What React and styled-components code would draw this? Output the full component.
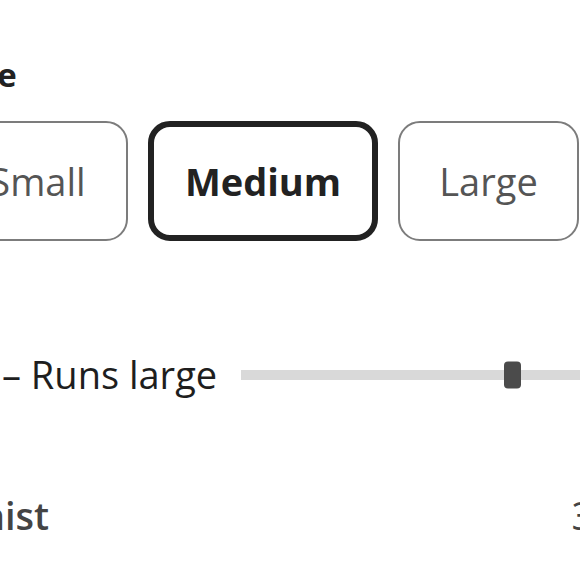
import React from 'react';
import styled, { createGlobalStyle } from 'styled-components';

const GlobalStyle = createGlobalStyle`
  html, body {
    margin: 0;
    padding: 0;
    background: #ffffff;
    overflow: hidden;
  }
  body {
    font-family: "Open Sans", "Liberation Sans", sans-serif;
    color: #222;
  }
`;

const Page = styled.div`
  display: flex;
  flex-direction: column;
  width: 668px;
  margin-left: -53px;
  padding-top: 55px;
`;

const SectionTitle = styled.h3`
  margin: 0;
  padding-left: 6px;
  font-size: 33px;
  line-height: 40px;
  font-weight: 700;
  color: #222;
`;

const ButtonRow = styled.div`
  display: flex;
  gap: 20px;
  margin-top: 26px;
`;

const SizeButton = styled.button`
  box-sizing: border-box;
  flex: none;
  width: ${p => p.$width}px;
  height: 120px;
  display: flex;
  align-items: center;
  justify-content: center;
  background: #fff;
  border: ${p => (p.$selected ? '6px solid #222' : '2px solid #7c7c7c')};
  border-radius: 22px;
  font-family: "Open Sans", "Liberation Sans", sans-serif;
  font-size: 38px;
  font-weight: ${p => (p.$selected ? 700 : 400)};
  color: ${p => (p.$selected ? '#222' : '#555')};
  padding: 0;
  cursor: pointer;
`;

const FitRow = styled.div`
  display: flex;
  align-items: center;
  margin-top: 111px;
  padding-left: 55px;
`;

const FitLabel = styled.span`
  font-size: 38px;
  line-height: 1.2;
  color: #1e1e1e;
  white-space: nowrap;
`;

const Track = styled.div`
  position: relative;
  flex: 1;
  height: 10px;
  margin-left: 24px;
  background: #d9d9d9;
`;

const Thumb = styled.div`
  position: absolute;
  top: 50%;
  width: 17px;
  height: 27px;
  margin-left: -9px;
  transform: translateY(-50%);
  background: #4b4b4b;
  border-radius: 4px;
`;

const MeasureRow = styled.div`
  display: flex;
  justify-content: space-between;
  align-items: baseline;
  margin-top: 95px;
`;

const MeasureName = styled.span`
  font-size: 38px;
  line-height: 1.2;
  font-weight: 600;
  color: #444;
`;

const MeasureValue = styled.span`
  font-size: 38px;
  line-height: 1.2;
  color: #444;
`;

const sizes = [
  { label: 'Small', width: 181 },
  { label: 'Medium', width: 230 },
  { label: 'Large', width: 181 },
];

export default function App() {
  const [selected, setSelected] = React.useState('Medium');
  const fit = 72.7;

  return (
    <>
      <GlobalStyle />
      <Page>
        <SectionTitle>Size</SectionTitle>
        <ButtonRow>
          {sizes.map(s => (
            <SizeButton
              key={s.label}
              $width={s.width}
              $selected={selected === s.label}
              onClick={() => setSelected(s.label)}
            >
              {s.label}
            </SizeButton>
          ))}
        </ButtonRow>
        <FitRow>
          <FitLabel>– Runs large</FitLabel>
          <Track>
            <Thumb style={{ left: `${fit}%` }} />
          </Track>
        </FitRow>
        <MeasureRow>
          <MeasureName>Waist</MeasureName>
          <MeasureValue>32</MeasureValue>
        </MeasureRow>
      </Page>
    </>
  );
}
